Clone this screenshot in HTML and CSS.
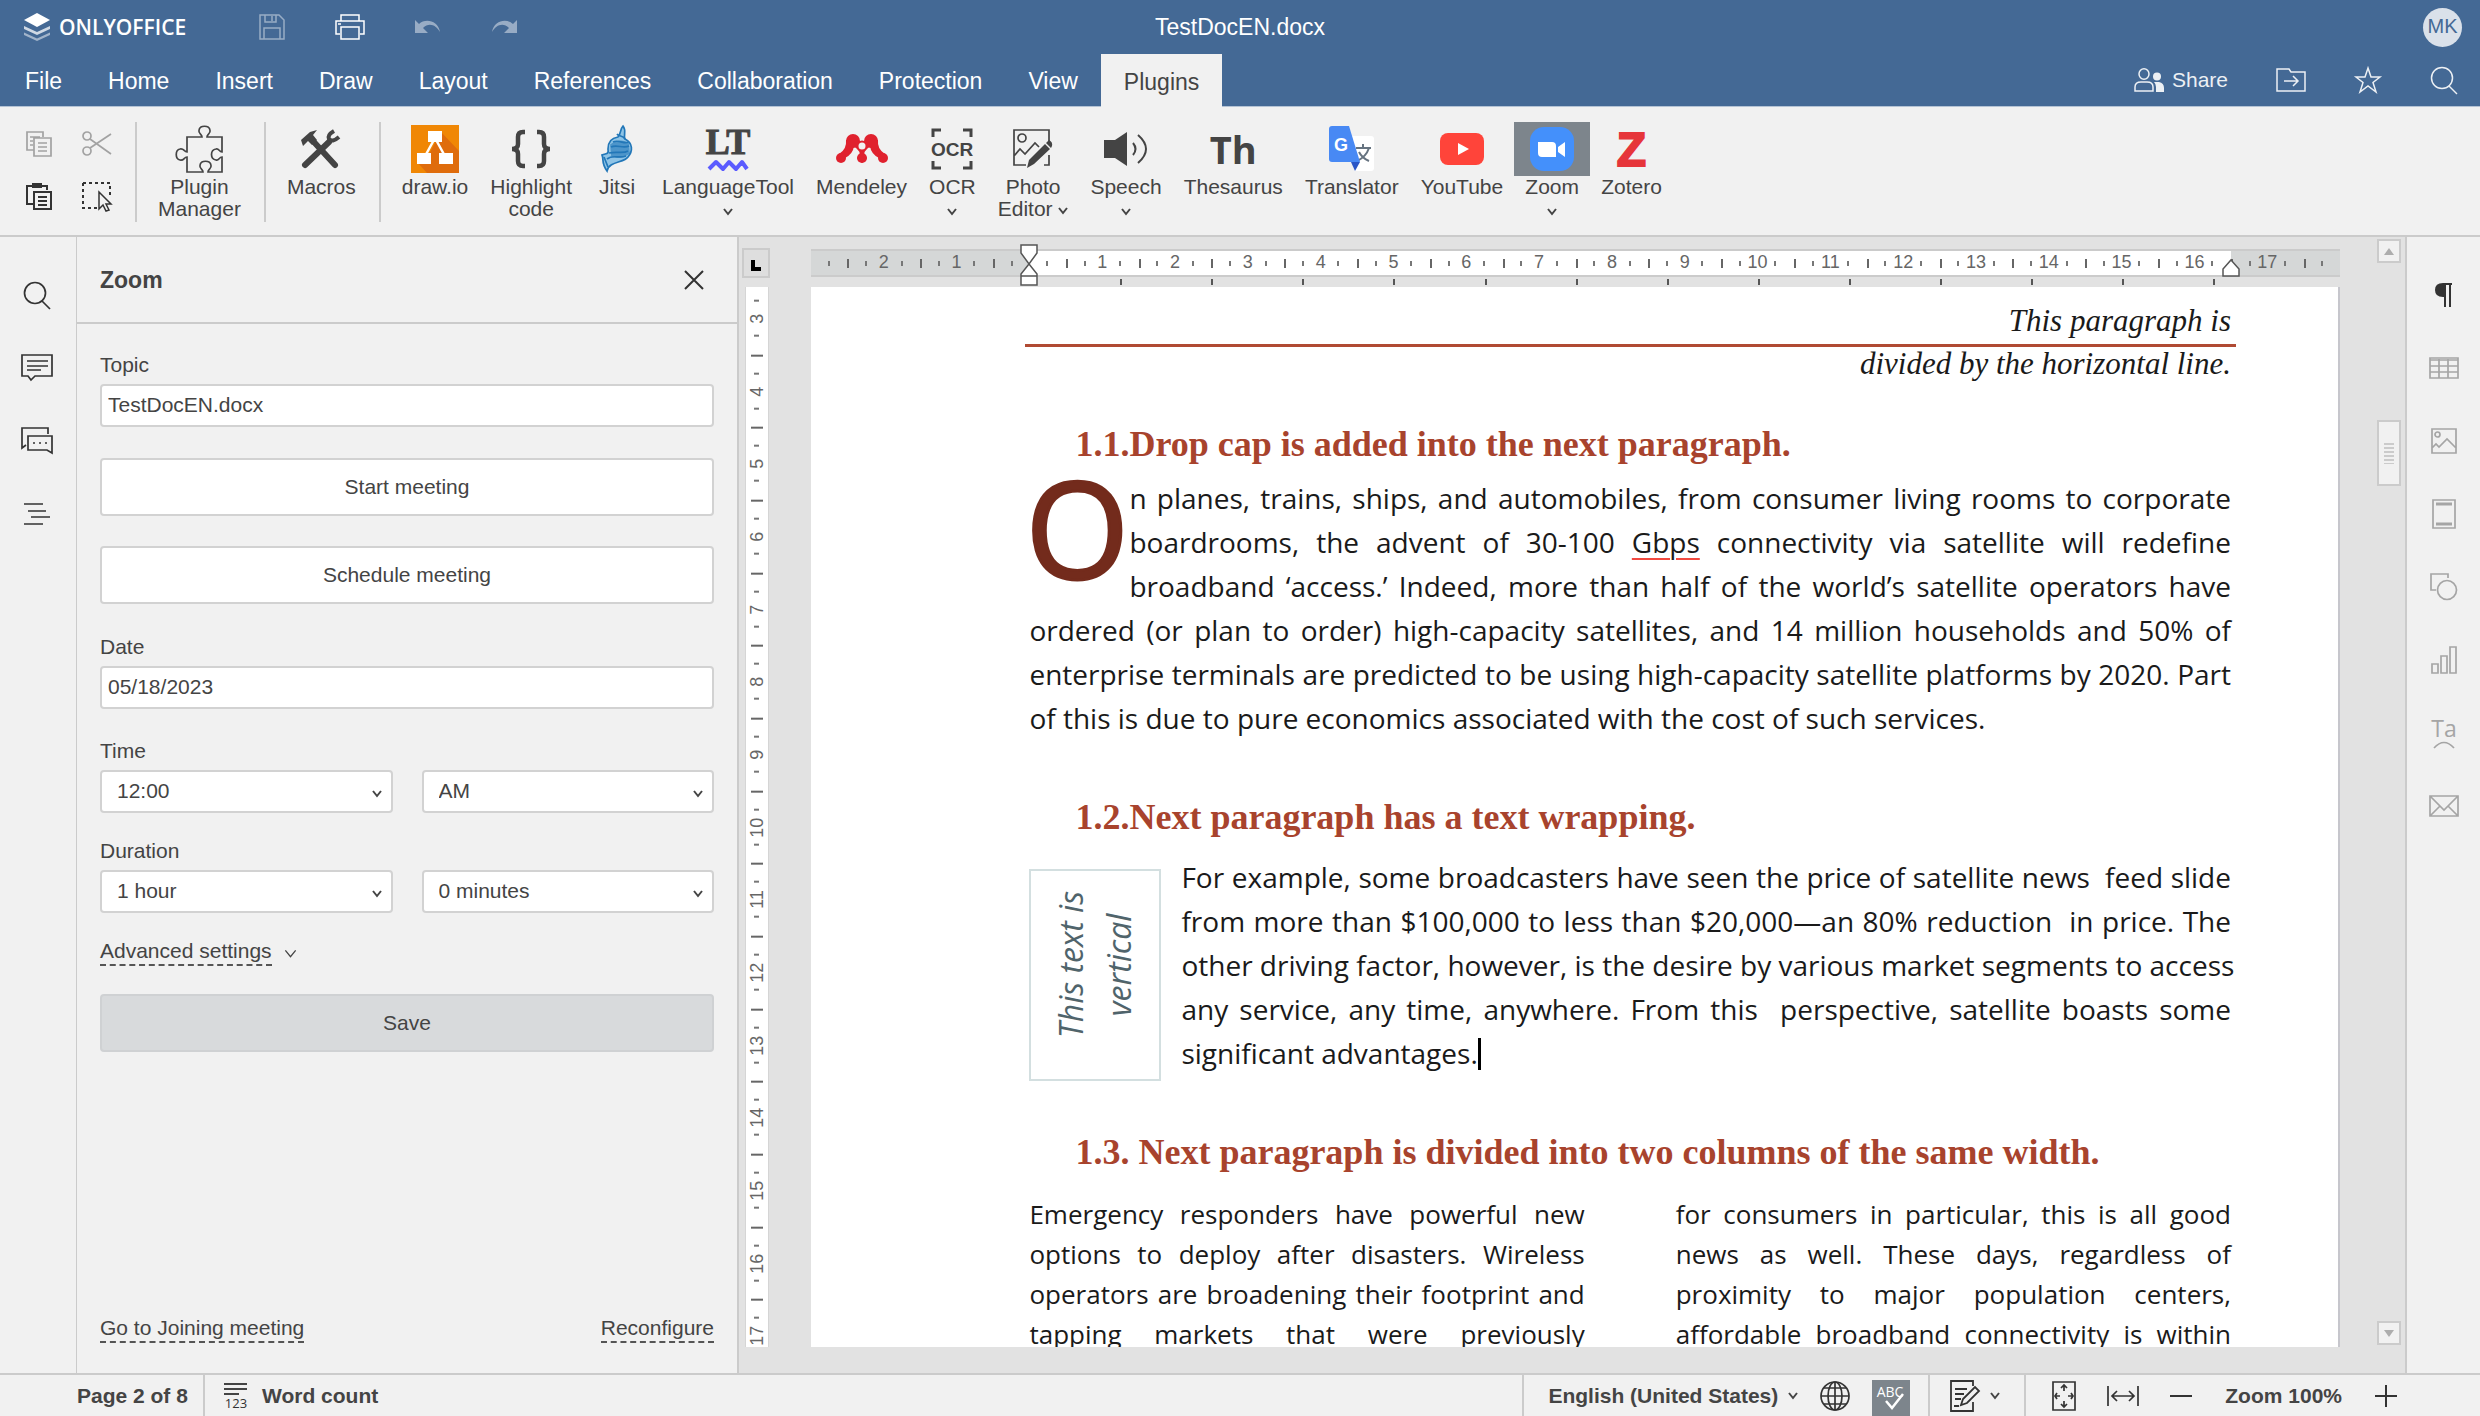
FILE: index.html
```html
<!DOCTYPE html>
<html lang="en">
<head>
<meta charset="utf-8">
<title>TestDocEN.docx</title>
<link rel="stylesheet" href="styles.css">
</head>
<body>
<header class="header">
  <div class="titlebar">
    <div class="brand-row">
      <a class="brand" href="#">
        <svg width="28" height="30" viewBox="0 0 28 30"><path d="M1 20.5 14 26.5 27 20.5V23L14 29 1 23Z" fill="#fff" opacity=".5"/><path d="M1 14 14 20 27 14V17L14 23 1 17Z" fill="#fff" opacity=".75"/><path d="M14 1 27 8 14 15 1 8Z" fill="#fff"/></svg>
        <span>ONLYOFFICE</span>
      </a>
      <div class="quick">
        <button class="ghost dim" aria-label="Save"><svg width="26" height="26" viewBox="0 0 26 26" fill="none" stroke="#fff" stroke-width="1.5"><path d="M1 1H20L25 6V25H1ZM5 25V14H21V25M6 1V8H17V1M13 2V7"/></svg></button>
        <button class="ghost" aria-label="Print"><svg width="30" height="26" viewBox="0 0 30 26" fill="none" stroke="#fff" stroke-width="1.5"><path d="M6 7V1H24V7M5 20H1V7H29V20H25M6 13H24V25H6ZM3 10H6"/></svg></button>
        <button class="ghost dim" aria-label="Undo"><svg width="26" height="16" viewBox="0 0 26 16" fill="#fff"><path d="M0 1V14H13L8 9C14 3 21 6 25 13 23 1 10-1 4 5Z"/></svg></button>
        <button class="ghost dim" aria-label="Redo"><svg width="26" height="16" viewBox="0 0 26 16" fill="#fff"><path d="M26 1V14H13L18 9C12 3 5 6 1 13 3 1 16-1 22 5Z"/></svg></button>
      </div>
    </div>
    <h1 class="doc-title">TestDocEN.docx</h1>
    <div class="user"><span class="avatar">MK</span></div>
  </div>
  <div class="tabrow">
    <nav class="tabs">
      <button>File</button><button>Home</button><button>Insert</button><button>Draw</button><button>Layout</button><button>References</button><button>Collaboration</button><button>Protection</button><button>View</button><button class="current">Plugins</button>
    </nav>
    <div class="actions">
      <button class="ghost share"><svg width="30" height="24" viewBox="0 0 30 24"><g fill="none" stroke="#fff" stroke-width="1.5"><ellipse cx="10" cy="6" rx="5" ry="5.2"/><path d="M1 23V19Q1 14 7 14H13Q19 14 19 19V23Z"/></g><ellipse cx="23" cy="8.500" rx="4" ry="4" fill="#fff"/><path d="M21 14H25Q30 15 30 20V24H22V19Q22 16 20 14Z" fill="#fff"/></svg>Share</button>
      <button class="ghost" aria-label="Open file location"><svg width="30" height="24" viewBox="0 0 30 24" fill="none" stroke="#fff" stroke-width="1.5"><path d="M1 1H13L15 4H29V23H1ZM8 13H21M17 8 22 13 17 18"/></svg></button>
      <button class="ghost" aria-label="Favorite"><svg width="28" height="28" viewBox="0 0 28 28" fill="none" stroke="#fff" stroke-width="1.500"><path d="M14 2 17 11H26L19 16.500 22 26 14 20 6 26 9 16.500 2 11H11Z"/></svg></button>
      <button class="ghost" aria-label="Search"><svg width="28" height="28" viewBox="0 0 28 28" fill="none" stroke="#fff" stroke-width="1.500"><circle cx="12" cy="12" r="10.500"/><path d="M19 20 27 28"/></svg></button>
    </div>
  </div>
</header>

<section class="toolbar" aria-label="Plugins">
  <div class="clip">
    <button class="ghost faded" aria-label="Copy"><svg width="26" height="26" viewBox="0 0 26 26" fill="none" stroke="#444" stroke-width="1.700"><path d="M8 19H1V1H17V6M4 6H14M4 10H7M4 14H7M8 7H25V25H8ZM12 12H21M12 16H21M12 20H21"/></svg></button>
    <button class="ghost faded" aria-label="Cut"><svg width="30" height="26" viewBox="0 0 30 26" fill="none" stroke="#444" stroke-width="1.700"><circle cx="5" cy="5" r="4"/><circle cx="5" cy="20" r="4"/><path d="M8 8 29 23M8 17 29 3"/></svg></button>
    <button class="ghost" aria-label="Paste"><svg width="26" height="28" viewBox="0 0 26 28" fill="none" stroke="#333" stroke-width="2"><path d="M8 22H1V4H21V8M8 10H25V27H8ZM12 15H21M12 19H21M12 23H21"/><path d="M6 1H16V6H6Z" fill="#333" stroke="none"/></svg></button>
    <button class="ghost" aria-label="Select all"><svg width="30" height="30" viewBox="0 0 30 30" fill="none" stroke="#333" stroke-width="2"><path d="M1 2H28V14M1 2V27H16" stroke-dasharray="3 3"/><path d="M17 11V28L21 24 24 30 27 29 24 23H29Z" fill="#f1f1f1" stroke-width="1.500"/></svg></button>
  </div>
  <div class="tool-group">
    <button class="tool"><span class="pic"><svg width="48" height="48" viewBox="0 0 48 48" fill="none" stroke="#444" stroke-width="1.700"><path d="M12 12H27C27 9 23 9 24 5 25 0 34 0 35 5 36 9 32 9 32 12H47V27C44 27 44 23 41 24 35 25 35 34 41 35 44 36 44 32 47 32V47H33C33 44 37 44 36 40 35 35 26 35 25 40 24 44 28 44 28 47H12V32C9 32 9 36 5 35 0 34 0 25 5 24 9 23 9 27 12 27Z"/></svg></span><span>Plugin<br>Manager</span></button>
  </div>
  <div class="tool-group">
    <button class="tool"><span class="pic"><svg width="40" height="40" viewBox="0 0 40 40" fill="none" stroke="#444"><path d="M4 36 28 13" stroke-width="6" stroke-linecap="round"/><path d="M12 12 34 36" stroke-width="6" stroke-linecap="round"/><path d="M0 11 9 3 16 1 12 6 16 11 11 16 7 12 2 17Z" fill="#444" stroke="none"/><path d="M33 2Q26 6 28 10 31 14 38 8" stroke-width="4"/></svg></span><span>Macros</span></button>
  </div>
  <div class="tool-group plugins">
    <button class="tool"><span class="pic"><svg width="48" height="48" viewBox="0 0 48 48"><path d="M0 0H48V48H0Z" fill="#f08705"/><path d="M30 7 48 26V48H16L7 38 18 29Z" fill="#df6c0c"/><path d="M24 13 13 33M24 13 35 33" stroke="#fff" stroke-width="2.500"/><path d="M17 6H31V17H17ZM6 28H20V39H6ZM28 28H42V39H28Z" fill="#fff"/></svg></span><span>draw.io</span></button>
    <button class="tool"><span class="pic"><svg width="40" height="40" viewBox="0 0 40 40" fill="none" stroke="#444" stroke-width="4.500"><path d="M14 3H12Q7 3 7 8V15Q7 20 1 20 7 20 7 25V32Q7 37 12 37H14M26 3H28Q33 3 33 8V15Q33 20 39 20 33 20 33 25V32Q33 37 28 37H26"/></svg></span><span>Highlight<br>code</span></button>
    <button class="tool"><span class="pic"><svg width="32" height="48" viewBox="0 0 32 48" fill="#8fc4e6" stroke="#2277b8" stroke-width="1.700"><path d="M22 1C26 6 22 10 24 14 32 18 32 26 27 32 23 38 8 36 6 46 0 38 3 34 1 30 5 28 8 30 7 24 7 18 10 13 17 12 20 9 19 4 22 1Z"/><path d="M10 20Q18 14 27 18L28 28Q20 34 11 31Z" fill="#2277b8" opacity=".6"/><path d="M12 17C18 14 24 20 27 17M10 22C16 19 22 24 28 21M8 28C16 26 22 29 27 26M6 34C12 29 18 34 25 31M16 9C18 12 22 10 24 14M3 32 7 42" fill="none"/></svg></span><span>Jitsi</span></button>
    <button class="tool"><span class="pic"><svg width="44" height="48" viewBox="0 0 44 48"><text x="22" y="29" class="lt-mark">LT</text><path d="M3 44 10 37 17 44 23 37 30 44 36 37 41 44" fill="none" stroke="#5b5bff" stroke-width="4" stroke-linejoin="round"/></svg></span><span>LanguageTool</span><svg class="chev" viewBox="0 0 10 7"><path d="M1 1 5 6 9 1"/></svg></button>
    <button class="tool"><span class="pic"><svg width="52" height="30" viewBox="0 0 52 30" fill="#e0212e"><circle cx="17" cy="7" r="7"/><circle cx="35" cy="7" r="7"/><circle cx="26" cy="12" r="5.500" fill="#e0212e"/><path d="M10 6Q11 15 3 20L9 24Q17 20 18 12L22 16Q26 20 21 24L26 29 31 24Q26 20 30 16L34 12Q35 20 43 24L49 20Q41 15 42 6L34 4 26 9 18 4Z"/><circle cx="5" cy="24" r="5"/><circle cx="26" cy="24" r="5"/><circle cx="47" cy="24" r="5"/><circle cx="26" cy="12" r="3.500" fill="#f1f1f1"/></svg></span><span>Mendeley</span></button>
    <button class="tool"><span class="pic"><svg width="40" height="42" viewBox="0 0 40 42"><path d="M1 9V2H9M31 2H39V9M1 33V40H9M31 40H39V33" fill="none" stroke="#444" stroke-width="3"/><text x="20" y="28" class="ocr-mark">OCR</text></svg></span><span>OCR</span><svg class="chev" viewBox="0 0 10 7"><path d="M1 1 5 6 9 1"/></svg></button>
    <button class="tool"><span class="pic"><svg width="40" height="40" viewBox="0 0 40 40" fill="none" stroke="#444" stroke-width="1.700"><path d="M36 12V1H1V36H13M31 36H36V26M1 27 7 20 12 25 22 14 26 18"/><circle cx="9" cy="9" r="4"/><path d="M14 39 16 31 32 15 37 20 21 35ZM33 14 36 11Q40 13 39 17L38 19Z" fill="#444" stroke="none"/></svg></span><span>Photo<br>Editor <svg class="chev" viewBox="0 0 10 7"><path d="M1 1 5 6 9 1"/></svg></span></button>
    <button class="tool"><span class="pic"><svg width="46" height="36" viewBox="0 0 46 36"><path d="M1 9H12L24 1V35L12 27H1Z" fill="#444"/><path d="M30 12Q35 18 30 24M35 4Q51 18 35 32" fill="none" stroke="#444" stroke-width="2"/></svg></span><span>Speech</span><svg class="chev" viewBox="0 0 10 7"><path d="M1 1 5 6 9 1"/></svg></button>
    <button class="tool"><span class="pic th-mark">Th</span><span>Thesaurus</span></button>
    <button class="tool"><span class="pic"><svg width="46" height="46" viewBox="0 0 46 46"><path d="M16 10H42Q45 10 45 13V42Q45 45 42 45H26Z" fill="#fff"/><path d="M27 22H42M34 18V22M40 22Q37 31 28 35M30 26Q33 32 40 35" fill="none" stroke="#667380" stroke-width="2"/><path d="M22 36H31L26 45Z" fill="#2a56c6"/><path d="M3 0H20L31 36H3Q0 36 0 33V3Q0 0 3 0Z" fill="#4889f4"/><text x="12" y="25" class="g-mark">G</text></svg></span><span>Translator</span></button>
    <button class="tool"><span class="pic"><svg width="44" height="32" viewBox="0 0 44 32"><rect width="44" height="32" rx="8" fill="#ff443a"/><path d="M18 10 29 16 18 22Z" fill="#fff"/></svg></span><span>YouTube</span></button>
    <button class="tool pressed"><span class="pic"><svg width="46" height="46" viewBox="0 0 46 46"><rect x="1" y="1" width="44" height="44" rx="14" fill="#4490fb"/><path d="M9 16H23Q27 16 27 20V31H13Q9 31 9 27ZM29 21 36 16V31L29 26Z" fill="#fff"/></svg></span><span>Zoom</span><svg class="chev" viewBox="0 0 10 7"><path d="M1 1 5 6 9 1"/></svg></button>
    <button class="tool"><span class="pic z-mark">Z</span><span>Zotero</span></button>
  </div>
</section>

<main class="workspace">
  <aside class="rail left">
    <button class="ghost" aria-label="Find"><svg width="28" height="28" viewBox="0 0 28 28"><circle cx="12" cy="12" r="10.500"/><path d="M19 20 27 28"/></svg></button>
    <button class="ghost" aria-label="Comments"><svg width="32" height="28" viewBox="0 0 32 28"><path d="M1 1H31V22H14L10 26 7 22H1ZM6 7H27M6 12H27M6 16H20"/></svg></button>
    <button class="ghost" aria-label="Chat"><svg width="32" height="28" viewBox="0 0 32 28"><path d="M27 7V1H1V21L5 18M7 9H31V26L26 23H7ZM12 16H14M18 16H20M24 16H26"/></svg></button>
    <button class="ghost" aria-label="Headings"><svg width="26" height="22" viewBox="0 0 26 22"><path d="M0 1H19M4 8H22M7 14H26M0 21H19"/></svg></button>
  </aside>

  <section class="panel">
    <div class="panel-head"><h2>Zoom</h2><button class="ghost" aria-label="Close"><svg width="20" height="20" viewBox="0 0 20 20" fill="none" stroke="#333" stroke-width="2"><path d="M1 1 19 19M19 1 1 19"/></svg></button></div>
    <form class="panel-body">
      <label for="topic">Topic</label>
      <input id="topic" type="text" value="TestDocEN.docx">
      <button class="wide" type="button">Start meeting</button>
      <button class="wide" type="button">Schedule meeting</button>
      <label for="date">Date</label>
      <input id="date" type="text" value="05/18/2023">
      <label for="time">Time</label>
      <div class="pair">
        <span class="pick"><select id="time"><option>12:00</option></select><svg class="chev" viewBox="0 0 10 7"><path d="M1 1 5 6 9 1"/></svg></span>
        <span class="pick"><select aria-label="AM or PM"><option>AM</option></select><svg class="chev" viewBox="0 0 10 7"><path d="M1 1 5 6 9 1"/></svg></span>
      </div>
      <label for="hours">Duration</label>
      <div class="pair">
        <span class="pick"><select id="hours"><option>1 hour</option></select><svg class="chev" viewBox="0 0 10 7"><path d="M1 1 5 6 9 1"/></svg></span>
        <span class="pick"><select aria-label="Minutes"><option>0 minutes</option></select><svg class="chev" viewBox="0 0 10 7"><path d="M1 1 5 6 9 1"/></svg></span>
      </div>
      <div class="advanced"><a class="dashed" href="#">Advanced settings</a><svg class="chev" viewBox="0 0 10 7"><path d="M1 1 5 6 9 1"/></svg></div>
      <button class="wide save" type="button">Save</button>
      <div class="links"><a class="dashed" href="#">Go to Joining meeting</a><a class="dashed" href="#">Reconfigure</a></div>
    </form>
  </section>

  <section class="editor">
    <button class="tabstop" aria-label="Tab stop"><svg width="10" height="11" viewBox="0 0 10 11"><path d="M2 0V9H10" fill="none" stroke="#000" stroke-width="4"/></svg></button>
    <div class="hruler">
      <div class="scale"><i class="half"></i><i>2</i><i>1</i><i></i><i>1</i><i>2</i><i>3</i><i>4</i><i>5</i><i>6</i><i>7</i><i>8</i><i>9</i><i>10</i><i>11</i><i>12</i><i>13</i><i>14</i><i>15</i><i>16</i><i>17</i><i class="half last"></i></div>
      <div class="stops"><b></b><b></b><b></b><b></b><b></b><b></b><b></b><b></b><b></b><b></b><b></b><b></b><b></b></div>
      <svg class="indent start" width="18" height="42" viewBox="0 0 18 42"><path d="M1 1H17V9L9 20 1 9ZM9 20 17 30V41H1V30ZM1 32H17" fill="#fff" stroke="#555" stroke-width="1.500"/></svg>
      <svg class="indent end" width="18" height="20" viewBox="0 0 18 20"><path d="M9 2 17 11V18H1V11Z" fill="#fff" stroke="#555" stroke-width="1.500"/></svg>
    </div>
    <div class="vruler"><div class="vscale"><i>3</i><i>4</i><i>5</i><i>6</i><i>7</i><i>8</i><i>9</i><i>10</i><i>11</i><i>12</i><i>13</i><i>14</i><i>15</i><i>16</i><i>17</i></div></div>
    <article class="page">
      <p class="lead">This paragraph is</p>
      <p class="lead ruled">divided by the horizontal line.</p>
      <h3 class="first">1.1.Drop cap is added into the next paragraph.</h3>
      <p class="body"><span class="drop">O</span>n planes, trains, ships, and automobiles, from consumer living rooms to corporate<br>boardrooms, the advent of 30-100 <u class="misspelt">Gbps</u> connectivity via satellite will redefine<br>broadband ‘access.’ Indeed, more than half of the world’s satellite operators have<br>ordered (or plan to order) high-capacity satellites, and 14 million households and 50% of<br>enterprise terminals are predicted to be using high-capacity satellite platforms by 2020. Part<br><span class="tail">of this is due to pure economics associated with the cost of such services.</span></p>
      <h3 class="second">1.2.Next paragraph has a text wrapping.</h3>
      <div class="wrap">
        <div class="textbox"><p>This text is<br>vertical</p></div>
        <p class="body">For example, some broadcasters have seen the price of satellite news&nbsp; feed slide<br>from more than $100,000 to less than $20,000—an 80% reduction&nbsp; in price. The<br>other driving factor, however, is the desire by various market segments to access<br>any service, any time, anywhere. From this&nbsp; perspective, satellite boasts some<br><span class="tail">significant advantages.<span class="caret"></span></span></p>
      </div>
      <h3 class="third">1.3. Next paragraph is divided into two columns of the same width.</h3>
      <div class="columns">
        <p class="body">Emergency responders have powerful new<br>options to deploy after disasters. Wireless<br>operators are broadening their footprint and<br>tapping markets that were previously</p>
        <p class="body">for consumers in particular, this is all good<br>news as well. These days, regardless of<br>proximity to major population centers,<br>affordable broadband connectivity is within</p>
      </div>
    </article>
    <div class="scroll">
      <button aria-label="Scroll up"><svg width="10" height="7" viewBox="0 0 10 7"><path d="M0 7 5 0 10 7Z" fill="#adadad"/></svg></button>
      <div class="thumb"><i></i></div>
      <button aria-label="Scroll down"><svg width="10" height="7" viewBox="0 0 10 7"><path d="M0 0 5 7 10 0Z" fill="#adadad"/></svg></button>
    </div>
  </section>

  <aside class="rail right">
    <button class="ghost" aria-label="Paragraph"><svg width="18" height="24" viewBox="0 0 18 24" class="solid"><path d="M17 1V0H8Q0 0 0 7T8 14H9V24H11V2H14V24H16V2H17Z"/></svg></button>
    <button class="ghost" aria-label="Table"><svg width="30" height="22" viewBox="0 0 30 22"><path d="M1 1H29V21H1ZM1 3H29M1 9H29M1 15H29M10 2V21M19 2V21"/></svg></button>
    <button class="ghost" aria-label="Image"><svg width="26" height="26" viewBox="0 0 26 26"><path d="M1 1H25V25H1ZM1 20 5 16 8 19 16 11 25 20"/><circle cx="6.500" cy="6.500" r="2.500"/></svg></button>
    <button class="ghost" aria-label="Header and footer"><svg width="24" height="30" viewBox="0 0 24 30"><path d="M1 1H23V29H1Z"/><path d="M4 5H20M4 25H20" stroke-width="3"/></svg></button>
    <button class="ghost" aria-label="Shape"><svg width="28" height="28" viewBox="0 0 28 28"><path d="M6 17H1V1H18V5"/><circle cx="17" cy="17" r="9.500"/></svg></button>
    <button class="ghost" aria-label="Chart"><svg width="26" height="28" viewBox="0 0 26 28"><path d="M1 18H7V27H1ZM10 10H16V27H10ZM19 1H25V27H19Z"/></svg></button>
    <button class="ghost" aria-label="Text art"><svg width="26" height="32" viewBox="0 0 26 32"><text x="13" y="20" class="ta-mark">Ta</text><path d="M3 31Q13 20 23 31"/></svg></button>
    <button class="ghost" aria-label="Mail merge"><svg width="30" height="22" viewBox="0 0 30 22"><path d="M1 1H29V21H1ZM1 1 15 15 29 1M1 21 11 11M29 21 19 11"/></svg></button>
  </aside>
</main>

<footer class="status">
  <span class="page-no">Page 2 of 8</span>
  <button class="ghost words"><svg width="24" height="26" viewBox="0 0 24 26"><path d="M0 1H23M0 6H23M0 11H15" stroke="#444" stroke-width="2"/><text x="12" y="25" class="num-mark">123</text></svg>Word count</button>
  <div class="seg lang">
    <button class="ghost">English (United States) <svg class="chev" viewBox="0 0 10 7"><path d="M1 1 5 6 9 1"/></svg></button>
    <button class="ghost" aria-label="Document language"><svg width="30" height="30" viewBox="0 0 30 30" fill="none" stroke="#333" stroke-width="1.700"><circle cx="15" cy="15" r="14"/><ellipse cx="15" cy="15" rx="7" ry="14"/><path d="M15 1V29M1 15H29M4 7H26M4 23H26"/></svg></button>
    <button class="spell" aria-label="Spell checking"><svg width="30" height="30" viewBox="0 0 30 30"><text x="14" y="14" class="abc-mark">ABC</text><path d="M10 18 16 25 27 11" fill="none" stroke="#fff" stroke-width="2.500"/></svg></button>
  </div>
  <div class="seg review"><button class="ghost" aria-label="Track changes"><svg width="30" height="32" viewBox="0 0 30 32" fill="none" stroke="#333" stroke-width="1.800"><path d="M23 6V1H1V31H23V22M5 9H17M5 14H14M5 19H11M11 25 13 19 25 7 29 11 17 23ZM4 26H9"/></svg><svg class="chev" viewBox="0 0 10 7"><path d="M1 1 5 6 9 1"/></svg></button></div>
  <div class="seg zoom">
    <button class="ghost" aria-label="Fit to page"><svg width="24" height="30" viewBox="0 0 24 30" fill="none" stroke="#333" stroke-width="1.700"><path d="M1 1H23V29H1ZM12 4V10M9 7 12 4 15 7M12 26V20M9 23 12 26 15 23M3 15H8M5 12 3 15 5 18M21 15H16M19 12 21 15 19 18"/></svg></button>
    <button class="ghost" aria-label="Fit to width"><svg width="32" height="20" viewBox="0 0 32 20" fill="none" stroke="#333" stroke-width="1.700"><path d="M1 0V20M31 0V20M5 10H27M10 5 5 10 10 15M22 5 27 10 22 15"/></svg></button>
    <button class="ghost" aria-label="Zoom out"><svg width="22" height="22" viewBox="0 0 22 22" stroke="#333" stroke-width="2"><path d="M0 11H22"/></svg></button>
    <span class="level">Zoom 100%</span>
    <button class="ghost" aria-label="Zoom in"><svg width="22" height="22" viewBox="0 0 22 22" stroke="#333" stroke-width="2"><path d="M0 11H22M11 0V22"/></svg></button>
  </div>
</footer>
</body>
</html>
```
FILE: styles.css
```css
* { box-sizing: border-box; }
html, body { height: 100%; margin: 0; }
body {
  display: flex;
  flex-direction: column;
  background: #f1f1f1;
  color: #444;
  font: 21px/22px "Liberation Sans", Arial, sans-serif;
  overflow: hidden;
}
h1, h2, h3, p { margin: 0; font-weight: normal; }
button, input, select { font: inherit; color: inherit; margin: 0; }
button { cursor: pointer; }
svg { display: block; flex: none; overflow: visible; }
a { color: inherit; text-decoration: none; }
.ghost { display: flex; align-items: center; padding: 0; border: 0; background: none; }
.chev { width: 10px; height: 7px; fill: none; stroke: #444; stroke-width: 2; }

/* Header */
.header { background: #446995; color: #fff; }
.titlebar { display: grid; grid-template-columns: 1fr auto 1fr; align-items: center; height: 54px; }
.brand-row, .brand, .quick { display: flex; align-items: center; }
.brand { gap: 8px; padding-left: 23px; font: 600 21px/28px "Open Sans", sans-serif; }
.quick { gap: 50px; padding-left: 73px; }
.dim { opacity: .45; }
.doc-title { font-size: 23px; }
.user { display: flex; justify-content: flex-end; padding-right: 18px; }
.avatar { width: 39px; height: 39px; border-radius: 50%; background: #dae1ea; color: #446995; font-size: 20px; line-height: 37px; text-align: center; }
.tabrow { display: flex; justify-content: space-between; height: 53px; border-bottom: 1px solid #b4c3d5; }
.tabs { display: flex; padding-left: 2px; }
.tabs button { padding: 2px 23px 0; border: 0; background: none; font-size: 23px; }
.tabs .current { background: #f1f1f1; color: #444; margin-bottom: -1px; }
.actions { display: flex; align-items: center; gap: 48px; padding-right: 22px; opacity: .9; }
.share { gap: 8px; }

/* Toolbar */
.toolbar { display: flex; align-items: flex-start; height: 130px; padding-top: 15px; border-bottom: 2px solid #cbcbcb; }
.clip { display: grid; grid-template-columns: 26px 30px; column-gap: 30px; grid-template-rows: 52px 52px; align-items: center; width: 135px; padding-left: 26px; margin-top: -4px; }
.faded { opacity: .45; }
.tool-group { display: flex; padding: 0 12px 0 10px; border-left: 2px solid #cbcbcb; height: 100px; }
.tool { display: flex; flex-direction: column; align-items: center; min-width: 68px; padding: 0 11px; border: 0; background: none; line-height: 22px; height: 100px; }
.pic { display: flex; align-items: center; justify-content: center; align-self: stretch; height: 54px; }
.tool > .chev { margin-top: 10px; }
.tool span .chev { display: inline-block; vertical-align: middle; }
.pressed { padding: 0; }
.pressed .pic { background: #7d858c; width: 76px; }
.lt-mark { font: 700 36px "Liberation Serif", serif; text-anchor: middle; fill: #444; stroke: #444; }
.ocr-mark { font: 700 19px "Liberation Sans", sans-serif; text-anchor: middle; fill: #444; }
.g-mark { font: 700 18px "Liberation Sans", sans-serif; text-anchor: middle; fill: #fff; }
.ta-mark { font: 23px "Open Sans", sans-serif; text-anchor: middle; fill: #a5a5a5; stroke: none; }
.num-mark { font: 13px "Open Sans", sans-serif; text-anchor: middle; fill: #333; }
.abc-mark { font: 14px "Open Sans", sans-serif; text-anchor: middle; fill: #fff; }
.th-mark { font: 700 38px "Open Sans", sans-serif; }
.z-mark { font: 700 48px "Liberation Sans", sans-serif; color: #e6353a; -webkit-text-stroke: 2px #e6353a; }

/* Work area */
.workspace { display: flex; flex: 1; min-height: 0; }
.rail { display: grid; grid-auto-rows: 73px; align-content: start; justify-items: center; padding-top: 21px; }
.rail svg { fill: none; stroke: #333; stroke-width: 1.7; }
.left { width: 77px; border-right: 1px solid #cbcbcb; padding-right: 2px; }
.right { width: 75px; border-left: 2px solid #cbcbcb; }
.right svg { stroke: #a5a5a5; }
.right .solid { fill: #333; stroke: none; }

/* Plugin panel */
.panel { display: flex; flex-direction: column; width: 662px; border-right: 2px solid #cbcbcb; }
.panel-head { display: flex; justify-content: space-between; align-items: center; height: 87px; padding: 0 33px 0 23px; border-bottom: 2px solid #cbcbcb; }
.panel-head h2 { font-size: 23px; font-weight: bold; }
.panel-body { display: flex; flex: 1; flex-direction: column; padding: 30px 23px 30px 23px; }
.panel-body label { height: 30px; }
.panel-body input, .panel-body select, .wide { border: 2px solid #d2d2d2; border-radius: 4px; background: #fff; width: 100%; }
.panel-body input { flex: none; height: 43px; padding: 0 6px 2px; margin-bottom: 31px; }
.wide { height: 58px; margin-bottom: 30px; flex: none; }
.wide + label { margin-top: 2px; }
.pair { display: grid; grid-template-columns: 1fr 1fr; gap: 29px; margin-bottom: 27px; }
.pick { display: grid; align-items: center; }
.pick > * { grid-area: 1 / 1; }
.pick .chev { justify-self: end; margin-right: 11px; margin-top: 4px; pointer-events: none; }
.pick select { appearance: none; height: 43px; padding: 0 15px 2px; }
.advanced { display: flex; align-items: center; gap: 12px; }
.advanced .chev { width: 13px; height: 9px; stroke-width: 1; }
.dashed { border-bottom: 2px dashed #555; padding-bottom: 2px; line-height: 22px; }
.save { background: #d8dadc; border-color: #cfd1d3; margin-top: 28px; }
.links { display: flex; justify-content: space-between; margin-top: auto; }

/* Document area */
.editor {
  display: grid;
  flex: 1;
  min-width: 0;
  grid-template-columns: 32px 1fr 24px;
  grid-template-rows: 50px 1fr;
  column-gap: 37px;
  padding: 0 4px 26px 3px;
  background: #e2e2e2;
}
.tabstop { align-self: start; display: flex; align-items: center; justify-content: center; width: 28px; height: 30px; margin-top: 11px; padding: 4px 0 0; border: 2px solid #cbcbcb; background: #dedede; }
.hruler { position: relative; padding-top: 12px; }
.scale { display: flex; height: 28px; border: solid #cbcbcb; border-width: 2px 0; background: linear-gradient(90deg, #d5d7d7 14.286%, #fff 0 92.857%, #d5d7d7 0); }
.scale i, .vscale i { flex: 1 1 0; font-style: normal; font-size: 18px; color: #666; text-align: center; line-height: 22px;
  background: linear-gradient(#666, #666) 0 50% / 2px 9px no-repeat, linear-gradient(#777, #777) 25% 50% / 2px 5px no-repeat, linear-gradient(#777, #777) 75% 50% / 2px 5px no-repeat; }
.scale i.half { flex-grow: .5; background: linear-gradient(#777, #777) 50% 50% / 2px 5px no-repeat; }
.scale i.last { background: linear-gradient(#666, #666) 0 50% / 2px 9px no-repeat, linear-gradient(#777, #777) 50% 50% / 2px 5px no-repeat; }
.stops { display: flex; margin: 2px 2.381% 0 20.238%; }
.stops b { flex: 1; height: 6px; border-left: 2px solid #555; }
.indent { position: absolute; }
.start { left: 14.286%; top: 7px; margin-left: -9px; }
.end { left: 92.857%; top: 21px; margin-left: -9px; }
.vruler { min-height: 0; overflow: hidden; width: 24px; margin-left: 3px; border: solid #d5d5d5; border-width: 0 1px; background: #fff; }
.vscale { display: flex; flex-direction: column; height: 1090px; margin-top: -5px; }
.vscale i { writing-mode: vertical-rl; transform: rotate(180deg); line-height: 22px;
  background: linear-gradient(#666, #666) 50% 100% / 12px 2px no-repeat, linear-gradient(#777, #777) 50% 25% / 5px 2px no-repeat, linear-gradient(#777, #777) 50% 75% / 5px 2px no-repeat; }
.page { min-width: 0; min-height: 0; overflow: hidden; padding: 13px 7% 0 14.286%; border-right: 2px solid #c6c6cc; background: #fff; color: #1a1a1a; }
.lead { font: italic 31px/42px "Liberation Serif", serif; text-align: right; }
.ruled { margin: 2px -5px 0 -4px; padding: 0 5px 0 4px; border-top: 3px solid #b04a33; line-height: 34px; }
h3 { padding-left: 46px; font: bold 36px/40px "Liberation Serif", serif; color: #a8432d; white-space: nowrap; }
.first { margin: 43px 0 12px; }
.second { margin: 57px 0 18px; }
.third { margin: 51px 0 22px; }
.body { font: 28px/44px "Open Sans", sans-serif; text-align: justify; text-align-last: justify; white-space: nowrap; }
.tail { display: block; text-align-last: left; }
.drop { float: left; width: 104px; margin-left: -4px; font-size: 133px; line-height: 104px; text-align-last: left; color: #732b1c; -webkit-text-stroke: 3px #732b1c; }
.misspelt { text-decoration: underline 2px #f24a40; text-underline-offset: 5px; }
.wrap { display: grid; grid-template-columns: 132px minmax(0, 1fr); column-gap: 20px; }
.textbox { display: flex; justify-content: center; align-items: flex-start; height: 212px; margin-top: 14px; padding-top: 20px; border: 2px solid #d3dfe0; }
.textbox p { writing-mode: vertical-rl; transform: rotate(180deg); font: italic 32px/48px "Open Sans", sans-serif; text-align: center; color: #50646b; }
.caret { display: inline-block; width: 3px; height: 32px; background: #000; vertical-align: -6px; }
.columns { display: grid; grid-template-columns: minmax(0, 1fr) minmax(0, 1fr); column-gap: 91px; }
.columns .body { font-size: 26px; line-height: 40px; }
.scroll { grid-column: 3; grid-row: 1 / 3; display: flex; flex-direction: column; margin: 2px 0; }
.scroll button, .thumb { display: flex; align-items: center; justify-content: center; width: 24px; height: 24px; padding: 0; border: 2px solid #cbcbcb; background: #f1f1f1; }
.thumb { height: 66px; margin: 157px 0 auto; }
.thumb i { width: 10px; height: 21px; background: repeating-linear-gradient(#cbcbcb 0 2px, transparent 2px 4px); }

/* Status bar */
.status { display: flex; align-items: center; height: 43px; border-top: 2px solid #cbcbcb; font-weight: bold; }
.page-no { padding-left: 77px; width: 205px; line-height: 42px; border-right: 2px solid #cbcbcb; }
.words { gap: 14px; padding-left: 19px; }
.status button { font-weight: bold; }
.seg { display: flex; align-items: center; height: 42px; border-left: 2px solid #cbcbcb; }
.lang { margin-left: auto; padding: 0 18px 0 24px; gap: 22px; }
.lang .ghost { gap: 10px; }
.spell { align-self: stretch; display: flex; align-items: center; width: 38px; padding: 0 4px; border: 0; background: #7d858c; margin: 5px 0 0; }
.review { padding: 0 24px 0 20px; }
.review .ghost { gap: 10px; }
.zoom { padding: 0 83px 0 26px; gap: 31px; }
.level { padding: 0 2px; }
```
